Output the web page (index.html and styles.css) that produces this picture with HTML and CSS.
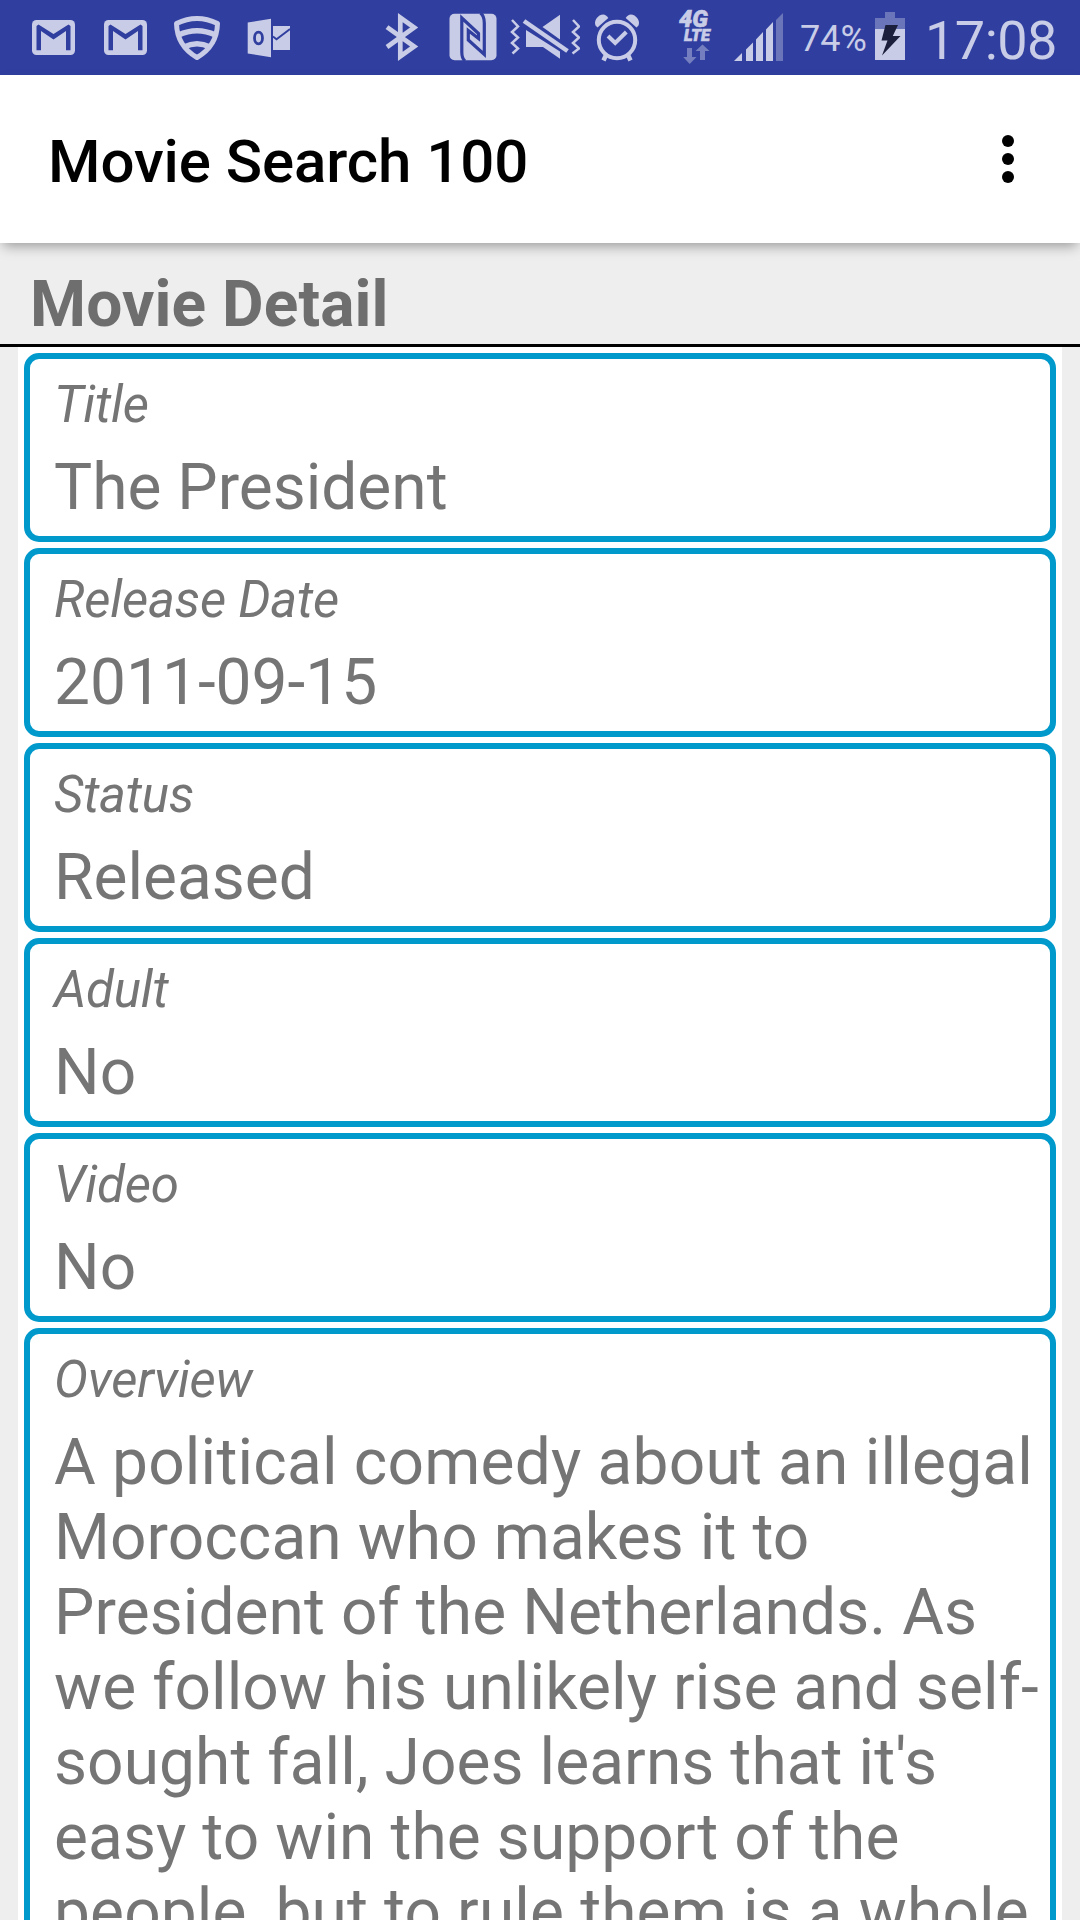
FILE: index.html
```html
<!DOCTYPE html>
<html lang="en">
<head>
<meta charset="utf-8">
<title>Movie Search 100</title>
<link rel="stylesheet" href="styles.css">
</head>
<body>
<div class="screen">
  <div class="status">
    <div class="status-left">
      <svg class="icon" width="43" height="75" viewBox="32 0 43 75">
        <rect x="32" y="20" width="43" height="35" rx="4.5" fill="#c9cce7"/>
        <path fill="#303f9f" d="M36.5 50.3V26l2-1.500L53.500 34l15-9.500 2 1.500V50.300H66V31L53.500 39.500 41 31V50.300Z"/>
      </svg>
      <svg class="icon" width="43" height="75" viewBox="32 0 43 75">
        <rect x="32" y="20" width="43" height="35" rx="4.5" fill="#c9cce7"/>
        <path fill="#303f9f" d="M36.5 50.3V26l2-1.500L53.500 34l15-9.500 2 1.500V50.300H66V31L53.500 39.500 41 31V50.300Z"/>
      </svg>
      <svg class="icon" width="46" height="75" viewBox="174 0 46 75" fill="none" stroke="#c9cce7" stroke-width="5">
        <path stroke-linejoin="round" d="M176.500 23.500Q197 13.500 217.500 23.500Q217 46 197 57.500Q177 46 176.500 23.500Z"/>
        <path d="M178.500 35Q197 26.500 215.500 35M184 47Q197 40.500 210 47" stroke-width="5.500"/>
      </svg>
      <svg class="icon" width="43" height="75" viewBox="247 0 43 75">
        <path fill="#c9cce7" d="M247.700 22.500 271 18.700V57.300L247.700 53.500ZM273 26h17V50h-17Z"/>
        <ellipse cx="258.500" cy="38" rx="4" ry="5.800" fill="none" stroke="#303f9f" stroke-width="2.800"/>
        <path d="M273 36.500l3.500 2.800L290 29" fill="none" stroke="#303f9f" stroke-width="1.800"/>
      </svg>
    </div>
    <div class="status-right">
      <svg class="icon" width="34" height="75" viewBox="385 0 34 75">
        <path fill="none" stroke="#c9cce7" stroke-width="4.700" d="M387 27.200 414.200 46.500 400.300 56.500V17.500L414.200 27.500 387 47"/>
      </svg>
      <svg class="icon nfc" width="48" height="75" viewBox="449 0 48 75">
        <rect x="449.500" y="13.700" width="47" height="46.500" rx="5" fill="#c9cce7"/>
        <path fill="none" stroke="#303f9f" stroke-width="3.200" d="M465 61Q461.800 58.500 461.800 52V18L478.500 33.500V38.500L468.300 30.500V40L484.300 54.500V23Q484.300 16 480.500 13"/>
      </svg>
      <svg class="icon mute" width="70" height="75" viewBox="510 0 70 75">
        <path fill="#c9cce7" d="M542.500 27 560 14.700V39.500ZM526 30 560 51.500V58.700L543 47H526Z"/>
        <path d="M524 21 567.500 51" stroke="#c9cce7" stroke-width="4.500"/>
        <path fill="none" stroke="#c9cce7" stroke-width="2.500" d="M512 20l6 6.500-6 5.500 6 5.500-6 5.500 6 5.500-5.500 5M573 20l6 6.500-6 5.500 6 5.500-6 5.500 6 5.500-6.500 5"/>
      </svg>
      <svg class="icon alarm" width="46" height="75" viewBox="594 0 46 75" fill="none" stroke="#c9cce7">
        <circle cx="617" cy="40" r="18.200" stroke-width="4"/>
        <path stroke-width="4" d="M608 36l7.200 7L626.300 32"/>
        <path fill="#c9cce7" stroke="none" d="M597.500 27.500 608.300 18Q605 12.500 599.500 15.500Q593.500 20 595.500 25.500ZM636.500 27.500 625.700 18Q629 12.500 634.500 15.500Q640.500 20 638.500 25.500Z"/>
        <path stroke-width="4.500" d="M606 55l-2.500 5.500M628 55l2.500 5.500"/>
      </svg>
      <svg class="icon lte" width="34" height="75" viewBox="678 0 34 75">
        <text x="679" y="27" class="net" font-size="24" textLength="29" lengthAdjust="spacingAndGlyphs">4G</text>
        <text x="684" y="41" class="net" font-size="16.500" textLength="26" lengthAdjust="spacingAndGlyphs">LTE</text>
        <path fill="#757fbf" d="M687 48h5v9h4.500L689.700 64 683.200 57H687ZM700 60V51H695.500L702.500 44.500 709.500 51H705V60Z"/>
      </svg>
      <svg class="icon signal" width="50" height="75" viewBox="734 0 50 75">
        <path fill="#c9cce7" d="M734 61 742 53V61ZM746 49.500 753 42.500V61H746ZM756 39.500 763 32V61H756ZM766 29.500 773 22V61H766Z"/>
        <path fill="#6b76ba" d="M776 20 783 13V61H776Z"/>
      </svg>
      <span class="percent">74%</span>
      <svg class="icon battery" width="30" height="75" viewBox="875 0 30 75">
        <path fill="#6b76ba" d="M875 18h10v-6h10v6h10V29H875Z"/>
        <path fill="#c9cce7" d="M875 29h30V60H875Z"/>
        <path fill="#1b1f3b" d="M885.500 25H898L892.800 36H900.500L882 55.500 887.500 40.500H881.500Z"/>
      </svg>
      <span class="clock">17:08</span>
    </div>
  </div>

  <header class="appbar">
    <h1 class="app-title">Movie Search 100</h1>
    <div class="menu"><i class="dot"></i><i class="dot"></i><i class="dot"></i></div>
  </header>

  <h2 class="section">Movie Detail</h2>

  <main class="list">
    <div class="card"><div class="label">Title</div><div class="value">The President</div></div>
    <div class="card"><div class="label">Release Date</div><div class="value">2011-09-15</div></div>
    <div class="card"><div class="label">Status</div><div class="value">Released</div></div>
    <div class="card"><div class="label">Adult</div><div class="value">No</div></div>
    <div class="card"><div class="label">Video</div><div class="value">No</div></div>
    <div class="card overview">
      <div class="label">Overview</div>
      <div class="value"><span class="wide">A political comedy about an illegal</span><br>Moroccan who makes it to<br>President of the Netherlands. As<br>we follow his unlikely rise and self-<br>sought fall, Joes learns that it's<br>easy to win the support of the<br><span class="mid">people, but to rule them is a whole</span></div>
    </div>
  </main>
</div>
</body>
</html>
```
FILE: styles.css
```css
* { box-sizing: border-box; }

body {
  margin: 0;
  background: #eee;
  font-family: Roboto, "Liberation Sans", sans-serif;
  overflow: hidden;
}

.screen {
  width: 1080px;
  height: 1920px;
  overflow: hidden;
  display: flex;
  flex-direction: column;
}

.status {
  flex: none;
  height: 75px;
  background: #303f9f;
  color: #c9cce7;
  display: flex;
  justify-content: space-between;
  padding: 0 19px 0 32px;
}

.status-left { display: flex; gap: 27px; }
.status-left .icon:first-child { margin-right: 2px; }
.status-right { display: flex; }
.icon { flex: none; display: block; }
.nfc { margin-left: 30px; }
.mute { margin-left: 13px; }
.alarm { margin-left: 14px; }
.lte { margin-left: 38px; }
.signal { margin-left: 22px; }
.battery { margin-left: 10px; }

.net {
  font-family: Roboto, sans-serif;
  font-weight: 900;
  font-style: italic;
  fill: #c9cce7;
  stroke: #c9cce7;
  stroke-width: .6px;
}

.percent {
  width: 65px;
  margin-left: 16px;
  font-size: 36px;
  line-height: 79px;
  white-space: nowrap;
}

.clock {
  width: 136px;
  margin-left: 20px;
  font-size: 54px;
  line-height: 81px;
  letter-spacing: -.5px;
  white-space: nowrap;
}

.appbar {
  flex: none;
  height: 168px;
  background: #fff;
  display: flex;
  align-items: center;
  justify-content: space-between;
  padding: 0 66px 0 48px;
  box-shadow: 0 6px 12px -3px rgba(0, 0, 0, .36);
  z-index: 1;
}

.app-title {
  margin: 0;
  padding-top: 5px;
  font-size: 60px;
  line-height: 70px;
  letter-spacing: -.08px;
  font-weight: 500;
  color: #000;
}

.menu {
  display: flex;
  flex-direction: column;
  gap: 6px;
}

.dot {
  width: 12px;
  height: 12px;
  border-radius: 50%;
  background: #000;
}

.section {
  flex: none;
  margin: 0;
  height: 104px;
  padding: 24px 30px 0;
  border-bottom: 3px solid #000;
  font-size: 64px;
  line-height: 75px;
  letter-spacing: .1px;
  font-weight: 700;
  color: #6e6e6e;
}

.list {
  flex: none;
  margin: 0 18px;
  padding: 6px;
  background: #fff;
  display: flex;
  flex-direction: column;
  gap: 6px;
}

.card {
  height: 189px;
  border: 6px solid #0099cc;
  border-radius: 15px;
  padding: 16px 0 0 24px;
  color: #757575;
}

.overview { height: 700px; }

.label {
  font-size: 51px;
  line-height: 60px;
  letter-spacing: -.25px;
  font-style: italic;
}

.value {
  margin-top: 15px;
  font-size: 64px;
  line-height: 75px;
  white-space: nowrap;
}

.overview .value { letter-spacing: .08px; }
.overview .wide { letter-spacing: .2px; }
.overview .mid { letter-spacing: .14px; }
```
